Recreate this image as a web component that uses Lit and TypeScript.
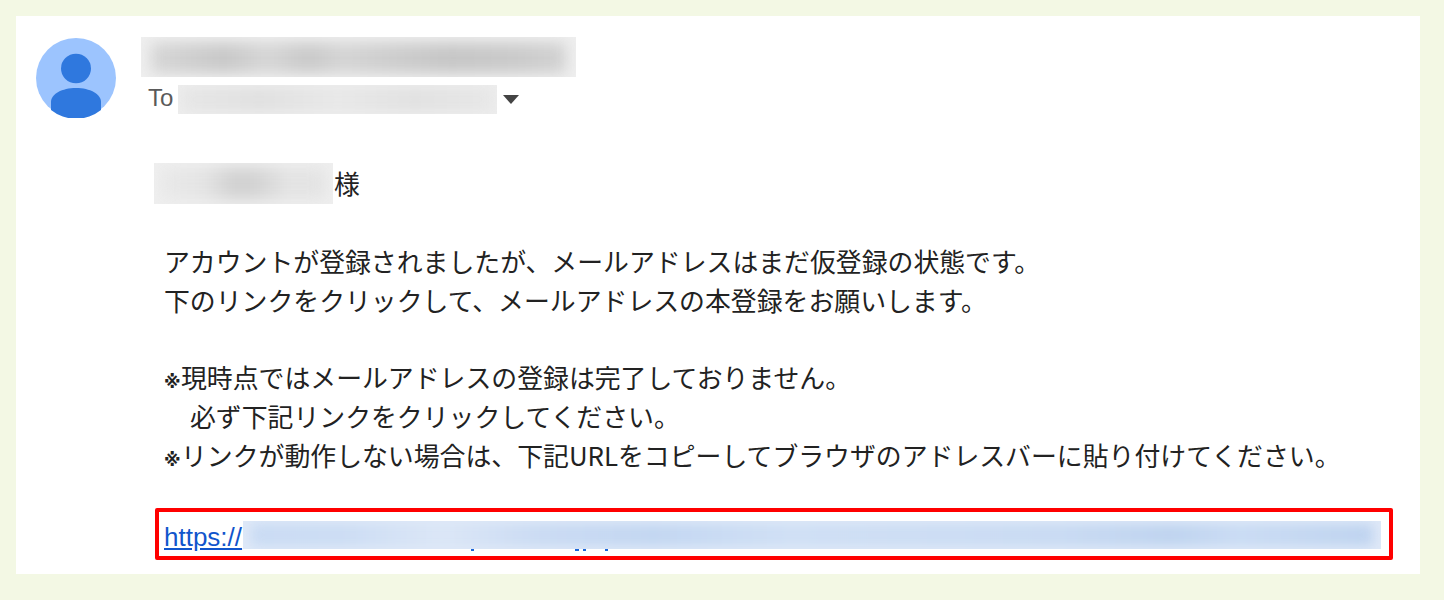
import { LitElement, html, css } from "lit";
import { customElement } from "lit/decorators.js";

@customElement("app-root")
export class AppRoot extends LitElement {
  static styles = css`
    :host { display: block; width: 1444px; height: 600px; overflow: hidden; background: #f3f8e4;
      font-family: "Noto Sans CJK JP", "Liberation Sans", sans-serif; color: #222; }
    .page { padding: 16px 24px 26px 16px; height: 600px; box-sizing: border-box; }
    .card { background: #fff; height: 558px; box-sizing: border-box; padding: 21px 0 0 20px; overflow: hidden; }
    .head { display: flex; gap: 25px; align-items: flex-start; }
    .avatar { display: block; width: 80px; height: 80px; margin-top: 1px; flex: none; }
    .who { display: flex; flex-direction: column; }

    .blur { overflow: hidden; display: flex; box-sizing: border-box; }
    .smear { flex: 1; }
    .sender { width: 435px; height: 40px; padding: 6px 10px 4px; background: #efefef; }
    .sender .smear { filter: blur(7px);
      background: linear-gradient(90deg, #d6d6d6, #c8c8c8 18%, #d6d6d6 28%, #c9c9c9 38%, #d4d4d4 46%, #cccccc 60%, #c6c6c6 72%, #cacaca 88%, #d2d2d2); }
    .to-blur { width: 319px; height: 29px; padding: 3px 5px; background: #ededed; }
    .to-blur .smear { filter: blur(6px);
      background: linear-gradient(90deg, #e6e6e6, #e0e0e0 25%, #e8e8e8 50%, #e1e1e1 75%, #e7e7e7); }
    .name-blur { width: 179px; height: 41px; padding: 5px 8px; background: #efefef; }
    .name-blur .smear { filter: blur(8px);
      background: linear-gradient(90deg, #e8e8e8, #e4e4e4 25%, #cfcfcf 45%, #d2d2d2 58%, #e4e4e4 78%, #e2e2e2); }
    .link-blur { width: 1138px; height: 28px; flex: none; padding: 3px 8px; background: #dfe9f8; }
    .link-blur .smear { filter: blur(6px);
      background: linear-gradient(90deg, #c9dbf3, #cbdcf3 8%, #dbe6f6 17%, #c9daf2 26%, #c2d6f1 36%, #cfdff4 48%, #cbdcf3 62%, #c8daf2 72%, #bed3ef 82%, #c9dbf3 88%, #bed3ef 100%); }

    .to { display: flex; align-items: center; height: 29px; margin-top: 8px; padding-left: 7px;
      font: 24px "Liberation Sans", sans-serif; color: #5a5a5a; }
    .to-label { width: 30px; position: relative; top: -2px; }
    .caret { display: block; width: 16px; height: 9px; margin-left: 6px; margin-top: -1px; fill: #444; }
    .body { margin: 45px 0 0 118px; font-size: 25.87px; line-height: 38.75px; }
    .salute { display: flex; align-items: center; height: 41px; }
    .sama { margin-left: 1px; }
    .lines { margin: 38px 0 0 10px; white-space: nowrap; }
    .line { height: 38.75px; }
    .gap { height: 38.75px; }
    .mark { display: inline-block; width: 17px; line-height: 1; font-family: "DejaVu Sans", sans-serif; font-size: 17px; font-weight: 700; }
    .indent { padding-left: 26px; }
    .linkbox { position: relative; box-sizing: border-box; width: 1238px; height: 52px; margin: 33.5px 0 0 1px;
      border: 4px solid #ff0000; border-radius: 2px; padding: 9px 0 0 5px; display: flex; align-items: flex-start; }
    .link { font: 26px/32px "Liberation Sans", sans-serif; color: #1155cc; text-decoration: underline; width: 79px; flex: none; }
    .ticks { position: absolute; left: 312px; top: 37px; width: 137px; height: 2px;
      background: linear-gradient(90deg, #1a66d8 0 3px, transparent 3px 104px, #1a66d8 104px 108px,
        transparent 108px 112px, #1a66d8 112px 115px, transparent 115px 134px, #1a66d8 134px 137px); }
  `;

  render() {
    return html`
      <div class="page">
        <div class="card">
          <div class="head">
            <svg class="avatar" viewBox="0 0 80 80" aria-hidden="true">
              <circle cx="40" cy="40" r="40" fill="#9cc4fe" />
              <ellipse cx="40" cy="30.5" rx="15" ry="14.7" fill="#2f78de" />
              <path d="M15 72 V64 C15 56 26 50 40 50 C54 50 65 56 65 64 V72 A40 40 0 0 1 15 72 Z" fill="#2f78de" />
            </svg>
            <div class="who">
              <div class="blur sender"><div class="smear"></div></div>
              <div class="to">
                <span class="to-label">To</span>
                <div class="blur to-blur"><div class="smear"></div></div>
                <svg class="caret" viewBox="0 0 16 9" aria-hidden="true"><path d="M0 0 H16 L8 9 Z" /></svg>
              </div>
            </div>
          </div>
          <div class="body">
            <div class="salute"><div class="blur name-blur"><div class="smear"></div></div><span class="sama">様</span></div>
            <div class="lines">
              <div class="line">アカウントが登録されましたが、メールアドレスはまだ仮登録の状態です。</div>
              <div class="line">下のリンクをクリックして、メールアドレスの本登録をお願いします。</div>
              <div class="gap"></div>
              <div class="line"><span class="mark">※</span>現時点ではメールアドレスの登録は完了しておりません。</div>
              <div class="line indent">必ず下記リンクをクリックしてください。</div>
              <div class="line"><span class="mark">※</span>リンクが動作しない場合は、下記URLをコピーしてブラウザのアドレスバーに貼り付けてください。</div>
            </div>
            <div class="linkbox">
              <span class="link">https://</span>
              <div class="blur link-blur"><div class="smear"></div></div>
              <div class="ticks"></div>
            </div>
          </div>
        </div>
      </div>
    `;
  }
}
